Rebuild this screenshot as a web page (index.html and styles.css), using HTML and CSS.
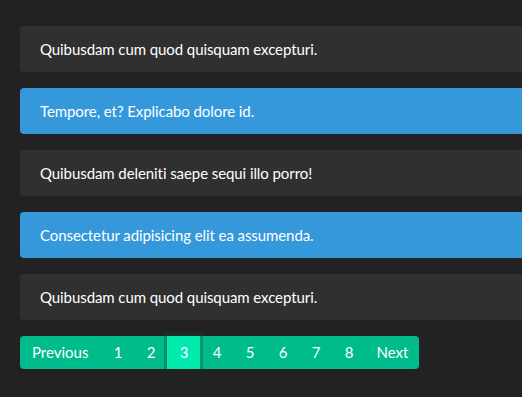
FILE: index.html
```html
<!DOCTYPE html>
<html>
<head>
<meta charset="utf-8">
<link rel="stylesheet" href="styles.css">
</head>
<body>
<div class="wrap">
  <ul class="list">
    <li class="item">Quibusdam cum quod quisquam excepturi.</li>
    <li class="item item-blue">Tempore, et? Explicabo dolore id.</li>
    <li class="item">Quibusdam deleniti saepe sequi illo porro!</li>
    <li class="item item-blue">Consectetur adipisicing elit ea assumenda.</li>
    <li class="item">Quibusdam cum quod quisquam excepturi.</li>
  </ul>
  <nav class="pager">
    <a class="page wide first">Previous</a>
    <a class="page">1</a>
    <a class="page">2</a>
    <a class="page active">3</a>
    <a class="page">4</a>
    <a class="page">5</a>
    <a class="page">6</a>
    <a class="page">7</a>
    <a class="page">8</a>
    <a class="page wide last">Next</a>
  </nav>
</div>
</body>
</html>
```

FILE: styles.css
```css
html, body {
  margin: 0;
  padding: 0;
  background: #222222;
  font-family: Lato, "Open Sans", sans-serif;
  font-size: 15px;
  color: #ffffff;
  overflow: hidden;
}
.wrap {
  padding: 26px 0 0 20px;
}
.list {
  list-style: none;
  margin: 0;
  padding: 0;
  display: flex;
  flex-direction: column;
  gap: 16px;
  width: 530px;
}
.item {
  background: #303030;
  border-radius: 4px;
  height: 46px;
  line-height: 46px;
  padding: 0 20px;
  letter-spacing: -0.08px;
}
.item-blue {
  background: #3498db;
}
.pager {
  margin-top: 16px;
  display: inline-flex;
  background: #00bc8c;
  border-radius: 4px;
  height: 33px;
}
.page {
  display: block;
  width: 33px;
  text-align: center;
  line-height: 33px;
  color: #ffffff;
}
.page.wide {
  width: auto;
  padding: 0 12px;
}
.page.first {
  padding-right: 13px;
}
.page.last {
  padding-left: 11px;
  padding-right: 11px;
}
.active {
  background: #00eaae;
  box-shadow: 0 0 0 3px rgba(18, 70, 58, 0.35);
  position: relative;
}
```
